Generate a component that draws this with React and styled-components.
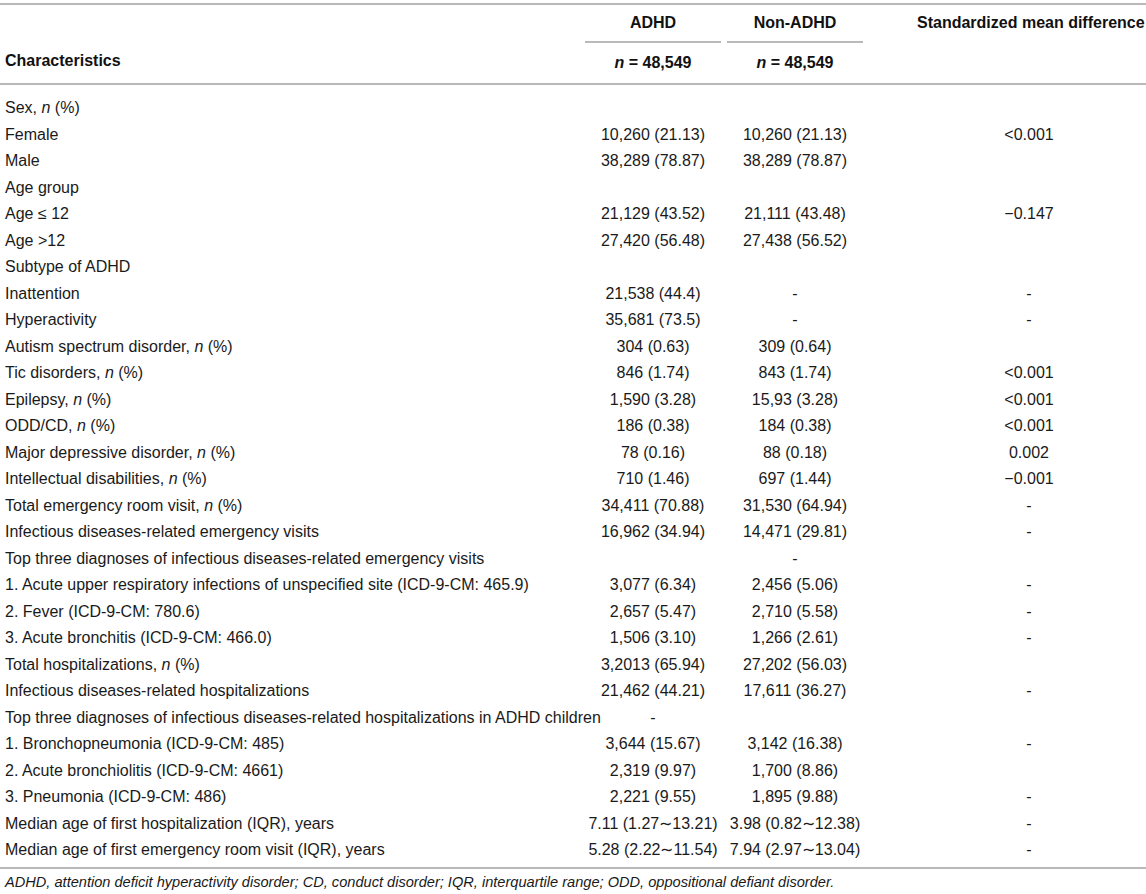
import React from 'react';
import styled, { createGlobalStyle } from 'styled-components';

const GlobalStyle = createGlobalStyle`
  html, body {
    margin: 0;
    padding: 0;
    background: #ffffff;
  }
  body {
    font-family: "Liberation Sans", Arial, Helvetica, sans-serif;
    color: #1a1a1a;
  }
`;

const rows = [
  { label: <>Sex, <i>n</i> (%)</> },
  { label: 'Female', a: '10,260 (21.13)', b: '10,260 (21.13)', d: '<0.001' },
  { label: 'Male', a: '38,289 (78.87)', b: '38,289 (78.87)' },
  { label: 'Age group' },
  { label: 'Age ≤ 12', a: '21,129 (43.52)', b: '21,111 (43.48)', d: '−0.147' },
  { label: 'Age >12', a: '27,420 (56.48)', b: '27,438 (56.52)' },
  { label: 'Subtype of ADHD' },
  { label: 'Inattention', a: '21,538 (44.4)', b: '-', d: '-' },
  { label: 'Hyperactivity', a: '35,681 (73.5)', b: '-', d: '-' },
  { label: <>Autism spectrum disorder, <i>n</i> (%)</>, a: '304 (0.63)', b: '309 (0.64)' },
  { label: <>Tic disorders, <i>n</i> (%)</>, a: '846 (1.74)', b: '843 (1.74)', d: '<0.001' },
  { label: <>Epilepsy, <i>n</i> (%)</>, a: '1,590 (3.28)', b: '15,93 (3.28)', d: '<0.001' },
  { label: <>ODD/CD, <i>n</i> (%)</>, a: '186 (0.38)', b: '184 (0.38)', d: '<0.001' },
  { label: <>Major depressive disorder, <i>n</i> (%)</>, a: '78 (0.16)', b: '88 (0.18)', d: '0.002' },
  { label: <>Intellectual disabilities, <i>n</i> (%)</>, a: '710 (1.46)', b: '697 (1.44)', d: '−0.001' },
  { label: <>Total emergency room visit, <i>n</i> (%)</>, a: '34,411 (70.88)', b: '31,530 (64.94)', d: '-' },
  { label: 'Infectious diseases-related emergency visits', a: '16,962 (34.94)', b: '14,471 (29.81)', d: '-' },
  { label: 'Top three diagnoses of infectious diseases-related emergency visits', b: '-' },
  { label: '1. Acute upper respiratory infections of unspecified site (ICD-9-CM: 465.9)', a: '3,077 (6.34)', b: '2,456 (5.06)', d: '-' },
  { label: '2. Fever (ICD-9-CM: 780.6)', a: '2,657 (5.47)', b: '2,710 (5.58)', d: '-' },
  { label: '3. Acute bronchitis (ICD-9-CM: 466.0)', a: '1,506 (3.10)', b: '1,266 (2.61)', d: '-' },
  { label: <>Total hospitalizations, <i>n</i> (%)</>, a: '3,2013 (65.94)', b: '27,202 (56.03)' },
  { label: 'Infectious diseases-related hospitalizations', a: '21,462 (44.21)', b: '17,611 (36.27)', d: '-' },
  { label: 'Top three diagnoses of infectious diseases-related hospitalizations in ADHD children', a: '-' },
  { label: '1. Bronchopneumonia (ICD-9-CM: 485)', a: '3,644 (15.67)', b: '3,142 (16.38)', d: '-' },
  { label: '2. Acute bronchiolitis (ICD-9-CM: 4661)', a: '2,319 (9.97)', b: '1,700 (8.86)' },
  { label: '3. Pneumonia (ICD-9-CM: 486)', a: '2,221 (9.55)', b: '1,895 (9.88)', d: '-' },
  { label: 'Median age of first hospitalization (IQR), years', a: '7.11 (1.27∼13.21)', b: '3.98 (0.82∼12.38)', d: '-' },
  { label: 'Median age of first emergency room visit (IQR), years', a: '5.28 (2.22∼11.54)', b: '7.94 (2.97∼13.04)', d: '-' },
];

const rule = '2px solid #b9b9b9';

const Page = styled.div`
  width: 1146px;
  height: 894px;
  box-sizing: border-box;
  padding-top: 3px;
  overflow: hidden;
`;

const Table = styled.table`
  width: 1146px;
  border-collapse: collapse;
  table-layout: fixed;
  font-size: 16px;
  border-top: ${rule};
  border-bottom: ${rule};
`;

const Head = styled.thead`
  border-bottom: ${rule};
`;

const HeadCell = styled.th`
  font-weight: bold;
  text-align: ${(p) => (p.$left ? 'left' : 'center')};
  vertical-align: ${(p) => p.$valign || 'middle'};
  padding: ${(p) => p.$pad || '0 5px'};
  height: ${(p) => p.$h || 38}px;
  white-space: nowrap;
  color: #111;
`;

const GroupLabel = styled.div`
  margin: 0 3px;
  height: 36px;
  line-height: 36px;
  border-bottom: ${rule};
`;

const Cell = styled.td`
  height: 26.5px;
  padding: ${(p) => (p.$first ? '10px 5px 0' : '0 5px')};
  text-align: ${(p) => (p.$left ? 'left' : 'center')};
  vertical-align: middle;
  white-space: nowrap;
  line-height: 18px;
  ${(p) => p.$last && 'padding-left: 51px;'}
  ${(p) => p.$tail && 'padding-bottom: 3px;'}
`;

const Footnote = styled.p`
  margin: 5px 0 0 5px;
  font-size: 14.6px;
  font-style: italic;
  color: #1a1a1a;
`;

export default function App() {
  return (
    <Page>
      <GlobalStyle />
      <Table>
        <colgroup>
          <col style={{ width: 582 }} />
          <col style={{ width: 142 }} />
          <col style={{ width: 142 }} />
          <col style={{ width: 280 }} />
        </colgroup>
        <Head>
          <tr>
            <HeadCell rowSpan={2} $left $valign="bottom" $pad="0 5px 13px">Characteristics</HeadCell>
            <HeadCell $pad="0">
              <GroupLabel>ADHD</GroupLabel>
            </HeadCell>
            <HeadCell $pad="0">
              <GroupLabel>Non-ADHD</GroupLabel>
            </HeadCell>
            <HeadCell rowSpan={2} $valign="top" $pad="9px 4px 0 51px">Standardized mean difference</HeadCell>
          </tr>
          <tr>
            <HeadCell $h={40}><i>n</i> = 48,549</HeadCell>
            <HeadCell $h={40}><i>n</i> = 48,549</HeadCell>
          </tr>
        </Head>
        <tbody>
          {rows.map((r, i) => {
            const first = i === 0;
            const tail = i === rows.length - 1;
            return (
              <tr key={i}>
                <Cell $left $first={first} $tail={tail}>{r.label}</Cell>
                <Cell $first={first} $tail={tail}>{r.a || ''}</Cell>
                <Cell $first={first} $tail={tail}>{r.b || ''}</Cell>
                <Cell $last $first={first} $tail={tail}>{r.d || ''}</Cell>
              </tr>
            );
          })}
        </tbody>
      </Table>
      <Footnote>
        ADHD, attention deficit hyperactivity disorder; CD, conduct disorder; IQR, interquartile range; ODD, oppositional defiant disorder.
      </Footnote>
    </Page>
  );
}
